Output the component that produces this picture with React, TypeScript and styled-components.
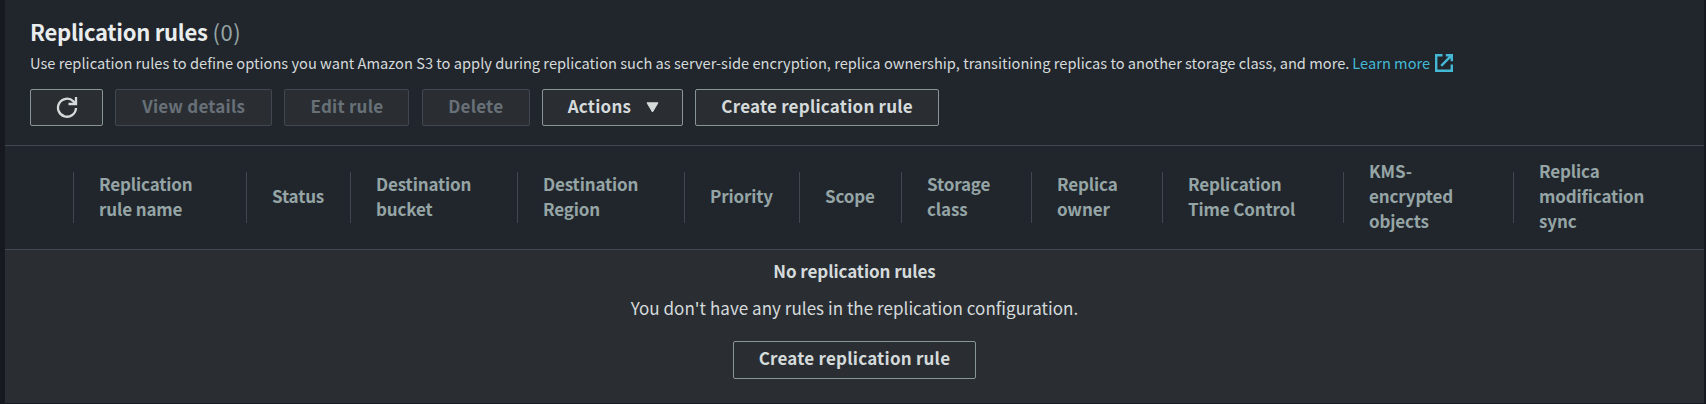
import React from "react";
import styled, { createGlobalStyle, css } from "styled-components";

const GlobalStyle = createGlobalStyle`
  *, *::before, *::after { box-sizing: border-box; }
  html, body, #root { height: 100%; }
  body {
    margin: 0;
    overflow: hidden;
    background: #16191f;
    color: #d5dbdb;
    font-family: "Noto Sans CJK SC", "Noto Sans", sans-serif;
    font-size: 17px;
    line-height: 25px;
  }
`;

const Page = styled.div`
  display: flex;
  height: 404px;
  padding: 0 2px 1px 5px;
`;

const Panel = styled.section`
  display: flex;
  flex: 1;
  flex-direction: column;
  min-width: 0;
  background: #2a2e33;
`;

const PanelHeader = styled.header`
  height: 146px;
  padding: 16px 25px 0;
  background: #21252c;
  border-bottom: 1px solid #414750;
`;

const Title = styled.h2`
  margin: 0;
  color: #eaeded;
  font-size: 22px;
  font-weight: 700;
  line-height: 30px;
  letter-spacing: -0.27px;
`;

const Counter = styled.span`
  color: #95a5a6;
  font-weight: 400;
  letter-spacing: 0.6px;
`;

const Description = styled.p`
  display: flex;
  align-items: center;
  margin: 4px 0 0;
  font-size: 14.65px;
  line-height: 25px;
  white-space: nowrap;
`;

const LearnMore = styled.a`
  display: inline-flex;
  align-items: center;
  gap: 5px;
  margin-left: 3px;
  color: #44b9d6;
`;

const Toolbar = styled.div`
  display: flex;
  gap: 12.375px;
  margin-top: 14px;
`;

const Button = styled.button<{ $width: number; $tall?: boolean }>`
  display: flex;
  align-items: center;
  justify-content: center;
  width: ${(p) => p.$width}px;
  height: ${(p) => (p.$tall ? 38 : 37)}px;
  padding: 0 0 ${(p) => (p.$tall ? 5 : 4)}px;
  border: 1px solid #879596;
  border-radius: 2px;
  background: #2a2e33;
  color: #d5dbdb;
  font: inherit;
  font-weight: 700;
  letter-spacing: 0.22px;
  white-space: nowrap;

  ${(p) =>
    p.disabled &&
    css`
      border-color: #414750;
      color: #687078;
    `}
`;

const IconButton = styled(Button)`
  padding: 0 0 2px;
`;

const MenuButton = styled(Button)`
  padding-left: 2px;
`;

const Caret = styled.svg`
  margin: 3px 0 0 15px;
`;

const ColumnHeaders = styled.div`
  display: grid;
  grid-template-columns: 68px 173px 104px 167px 167px 115px 102px 130px 131px 181px 170px 1fr;
  align-items: center;
  height: 104px;
  background: #21252c;
  border-bottom: 1px solid #414750;
`;

const ColumnHeader = styled.div`
  display: flex;
  align-items: center;
  height: 51px;
  padding: 0 0 4px 25px;
  border-left: 1px solid #414750;
  color: #95a5a6;
  font-weight: 700;
  letter-spacing: -0.14px;
  white-space: pre-line;
`;

const EmptyState = styled.div`
  display: flex;
  flex-direction: column;
  align-items: center;
  padding: 8px 0 0;
`;

const EmptyTitle = styled.strong`
  font-weight: 700;
  letter-spacing: -0.08px;
`;

const EmptyText = styled.p`
  margin: 12px 0 21px;
  letter-spacing: 0.04px;
`;

const columns = [
  "Replication\nrule name",
  "Status",
  "Destination\nbucket",
  "Destination\nRegion",
  "Priority",
  "Scope",
  "Storage\nclass",
  "Replica\nowner",
  "Replication\nTime Control",
  "KMS-\nencrypted\nobjects",
  "Replica\nmodification\nsync",
];

const RefreshIcon = () => (
  <svg width="22" height="22" viewBox="0 0 22 22" fill="none" stroke="#d5dbdb" strokeWidth="2.3">
    <path d="M20 12a9 9 0 1 1-2.6-6.6L19 7" />
    <path d="M20 1v7h-7.5" />
  </svg>
);

const ExternalIcon = () => (
  <svg width="18" height="18" viewBox="0 0 18 18" fill="none" stroke="#44b9d6" strokeWidth="2.4">
    <path d="M7.5 1.2H1.2v15.6h15.6v-6.2" />
    <path d="M10.8 1.2h6v6M16.8 1.2L6.2 11.8" />
  </svg>
);

export default function App() {
  return (
    <Page>
      <GlobalStyle />
      <Panel>
        <PanelHeader>
          <Title>
            Replication rules <Counter>(0)</Counter>
          </Title>
          <Description>
            Use replication rules to define options you want Amazon S3 to apply during replication such as
            server-side encryption, replica ownership, transitioning replicas to another storage class, and more.
            <LearnMore>
              Learn more
              <ExternalIcon />
            </LearnMore>
          </Description>
          <Toolbar>
            <IconButton $width={73} aria-label="Refresh">
              <RefreshIcon />
            </IconButton>
            <Button $width={156.6} disabled>View details</Button>
            <Button $width={125.1} disabled>Edit rule</Button>
            <Button $width={107.8} disabled>Delete</Button>
            <MenuButton $width={141}>
              Actions
              <Caret width="13" height="11" viewBox="0 0 13 11">
                <path d="M1 .8h11L6.5 10z" fill="#d5dbdb" stroke="#d5dbdb" strokeLinejoin="round" />
              </Caret>
            </MenuButton>
            <Button $width={243.6}>Create replication rule</Button>
          </Toolbar>
        </PanelHeader>
        <ColumnHeaders>
          <span />
          {columns.map((label) => (
            <ColumnHeader key={label}>{label}</ColumnHeader>
          ))}
        </ColumnHeaders>
        <EmptyState>
          <EmptyTitle>No replication rules</EmptyTitle>
          <EmptyText>You don't have any rules in the replication configuration.</EmptyText>
          <Button $width={243} $tall>Create replication rule</Button>
        </EmptyState>
      </Panel>
    </Page>
  );
}
